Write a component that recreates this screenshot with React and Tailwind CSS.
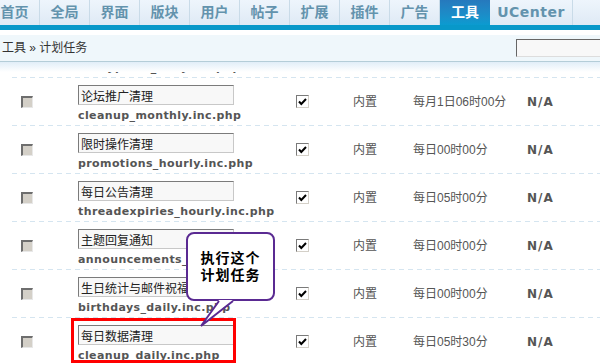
import React from 'react';

const tabs = ['首页', '全局', '界面', '版块', '用户', '帖子', '扩展', '插件', '广告', '工具', 'UCenter'];

const rows = [
    { name: '清空今日发帖数', file: 'todayposts_daily.inc.php', time: '每日00时00分' },
    { name: '论坛推广清理', file: 'cleanup_monthly.inc.php', time: '每月1日06时00分' },
    { name: '限时操作清理', file: 'promotions_hourly.inc.php', time: '每日00时00分' },
    { name: '每日公告清理', file: 'threadexpiries_hourly.inc.php', time: '每日05时00分' },
    { name: '主题回复通知', file: 'announcements_daily.inc.php', time: '每日00时00分' },
    { name: '生日统计与邮件祝福', file: 'birthdays_daily.inc.php', time: '每日00时00分' },
    { name: '每日数据清理', file: 'cleanup_daily.inc.php', time: '每日05时30分' },
];

const DisabledBox = () => (
    <span className="block h-[12px] w-[12px] border-l-2 border-t-2 border-[#6e6e6e] border-b border-r border-b-[#e8e8e8] border-r-[#e8e8e8] bg-[#d4d0c8]" />
);

const CheckedBox = () => (
    <span className="flex h-[13px] w-[13px] items-center justify-center border-l border-t border-[#7a7a7a] border-b border-r border-b-[#d4d0c8] border-r-[#d4d0c8] bg-white">
        <svg width="9" height="8" viewBox="0 0 9 8">
            <path d="M1 3.5 L3.3 6 L8 1" stroke="#000" strokeWidth="2" fill="none" />
        </svg>
    </span>
);

const App = () => {
    return (
        <div className="relative h-[364px] w-[600px] overflow-hidden bg-white font-['Liberation_Sans','Noto_Sans_CJK_SC',sans-serif]">
            {/* top tabs */}
            <div className="flex h-[25px] bg-gradient-to-b from-[#eef5fc] to-[#dfeaf5]">
                {tabs.map((t, i) => (
                    <div
                        key={t}
                        className={
                            t === '工具'
                                ? 'flex h-[25px] w-[50px] shrink-0 items-center justify-center bg-gradient-to-b from-[#2679bd] to-[#0a9bd0] text-[14px] font-bold text-white'
                                : i === 0
                                ? 'ml-[-10px] flex h-[25px] w-[50px] shrink-0 items-center justify-center border-r border-[#c9dbe8] text-[14px] font-bold text-[#6393ad]'
                                : t === 'UCenter'
                                ? 'flex h-[25px] w-[83px] shrink-0 items-center justify-center border-r border-[#c9dbe8] font-["DejaVu_Sans",sans-serif] text-[14px] font-bold tracking-[0.5px] text-[#6393ad]'
                                : 'flex h-[25px] w-[50px] shrink-0 items-center justify-center border-r border-[#c9dbe8] text-[14px] font-bold text-[#6393ad]'
                        }
                    >
                        {t}
                    </div>
                ))}
            </div>
            <div className="h-[5px] bg-[#0898c9]" />
            <div className="h-[5px] bg-white" />

            {/* breadcrumb */}
            <div className="flex h-[27px] items-center justify-between border-b border-[#b4cdd8] bg-[#eff7fb] pl-[2px]">
                <span className="text-[12px] text-[#333]">工具 » 计划任务</span>
                <input
                    readOnly
                    className="mr-[-6px] h-[18px] w-[90px] shrink-0 border-l border-t border-[#666] border-b border-r border-b-[#ddd] border-r-[#ddd] bg-[#f8f8f8] outline-none"
                />
            </div>
            <div className="h-[10px] bg-gradient-to-b from-[#e1eef8] to-white" />

            {/* task rows */}
            <div className="overflow-hidden">
                <div className="mt-[-42px]">
                    {rows.map((r) => (
                        <div key={r.file}>
                            <div className="grid h-[47px] grid-cols-[78px_218px_57px_60px_114px_1fr] items-center">
                                <div className="pl-[21px]">
                                    <DisabledBox />
                                </div>
                                <div className="flex h-[47px] flex-col">
                                    <input
                                        readOnly
                                        value={r.name}
                                        className="mt-[7px] h-[20px] w-[156px] border-l border-t border-[#7b7b7b] border-b border-r border-b-[#c8c8c8] border-r-[#c8c8c8] bg-[#f8f8f8] px-[2px] text-[12px] text-[#222] outline-none font-['Liberation_Sans','Noto_Sans_CJK_SC',sans-serif]"
                                    />
                                    <span className="mt-[3px] font-['DejaVu_Sans',sans-serif] text-[11px] font-bold leading-[15px] tracking-[0.4px] text-[#555]">
                                        {r.file}
                                    </span>
                                </div>
                                <div>
                                    <CheckedBox />
                                </div>
                                <span className="text-[12px] text-[#555]">内置</span>
                                <span className="text-[12px] text-[#555]">{r.time}</span>
                                <span className="font-['DejaVu_Sans',sans-serif] text-[12px] font-bold tracking-[1px] text-[#555]">N/A</span>
                            </div>
                            <div className="ml-[12px] h-px bg-[repeating-linear-gradient(90deg,#d5e5f0_0_5px,transparent_5px_9px)]" />
                        </div>
                    ))}
                </div>
            </div>

            {/* highlight box */}
            <div className="absolute left-[71px] top-[318px] h-[45px] w-[165px] border-[3px] border-[#ff0000]" />

            {/* callout */}
            <div className="absolute left-[186px] top-[232px] flex h-[69px] w-[89px] flex-col items-center justify-center rounded-[8px] border-2 border-[#5a2a92] bg-white">
                <span className="text-[14px] font-bold leading-[17px] tracking-[1px] text-black">执行这个</span>
                <span className="text-[14px] font-bold leading-[17px] tracking-[1px] text-black">计划任务</span>
            </div>
            <svg className="absolute left-[196px] top-[297px]" width="42" height="32" viewBox="0 0 42 32">
                <polygon points="23,3 37,3 5,29" fill="#fff" />
                <path d="M23 4 L5 29 L37 4" stroke="#5a2a92" strokeWidth="2" fill="none" />
            </svg>
        </div>
    );
};

export default App;
